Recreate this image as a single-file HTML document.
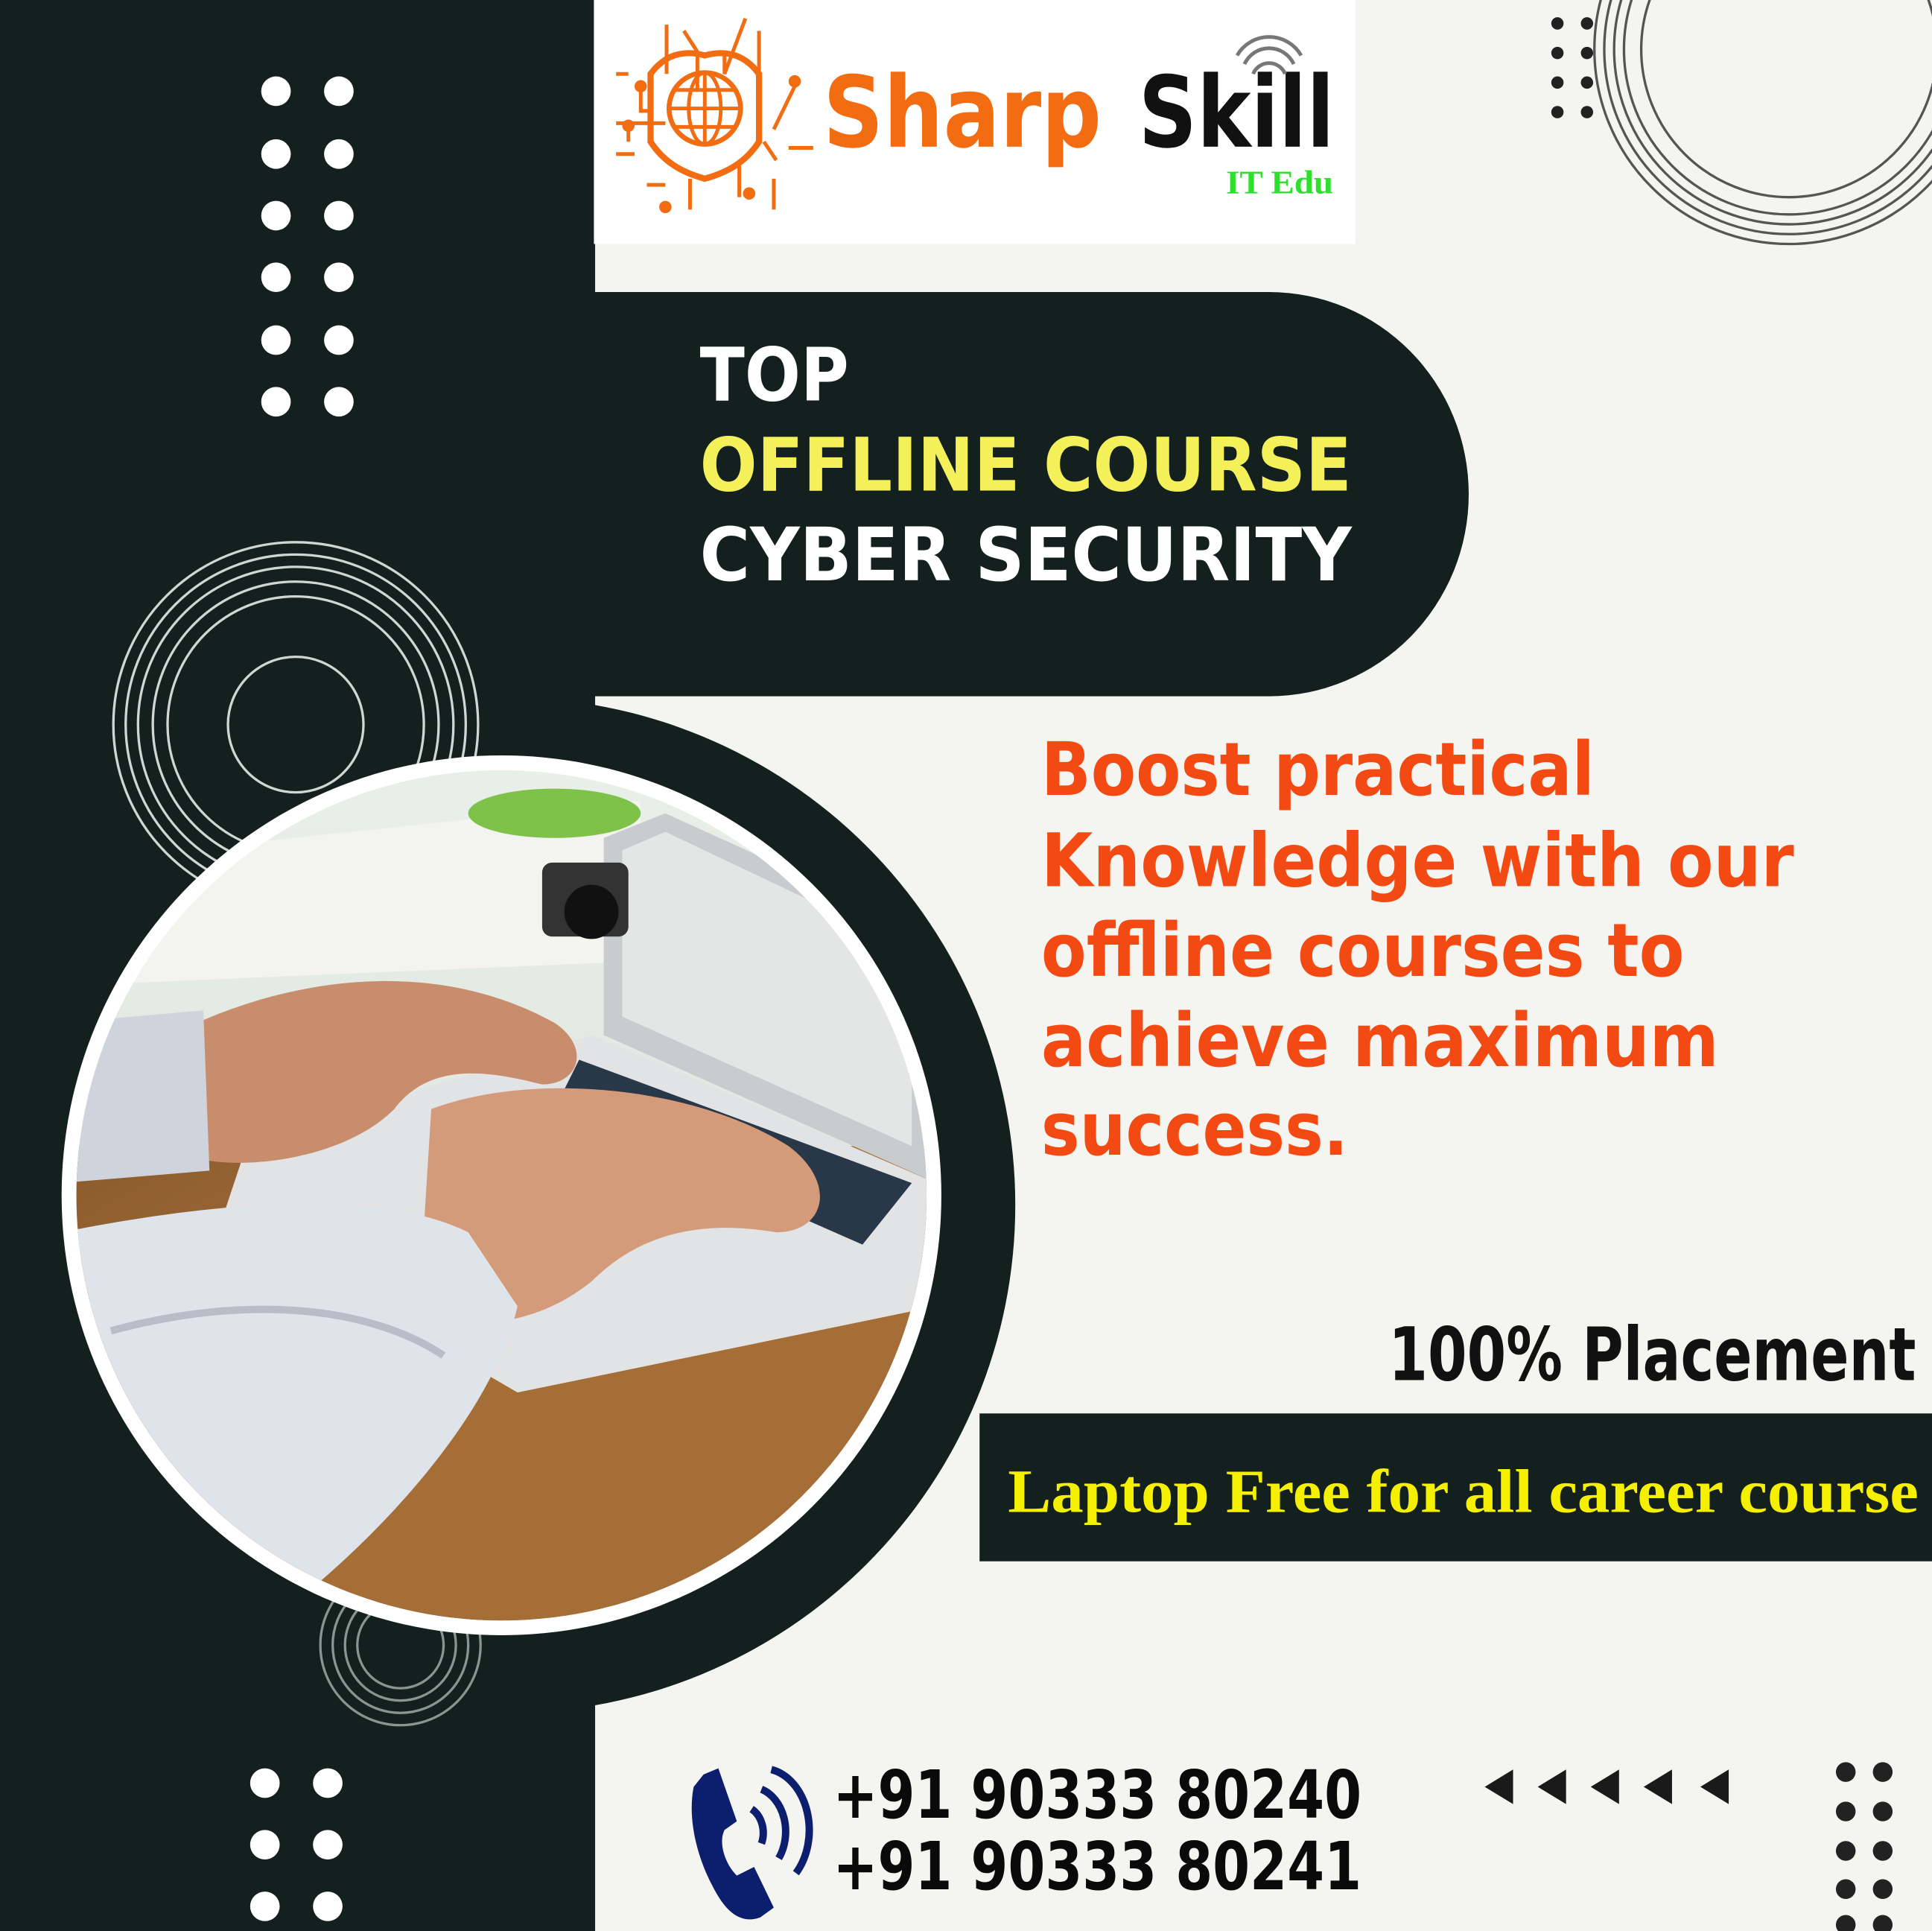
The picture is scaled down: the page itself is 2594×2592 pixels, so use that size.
<!DOCTYPE html>
<html><head><meta charset="utf-8"><style>
html,body{margin:0;padding:0;background:#f4f4f1;}
svg{display:block;}
</style></head><body>
<svg width="2594" height="2592" viewBox="0 0 1568 1567" xmlns="http://www.w3.org/2000/svg" preserveAspectRatio="none">
<defs>
<clipPath id="pc"><circle cx="407" cy="970" r="345"/></clipPath>
<linearGradient id="wall" x1="0" y1="0" x2="0" y2="1"><stop offset="0" stop-color="#e9efe9"/><stop offset="1" stop-color="#d8dcd8"/></linearGradient>
<linearGradient id="wood" x1="0" y1="0" x2="1" y2="1"><stop offset="0" stop-color="#8a5a2c"/><stop offset="0.5" stop-color="#b07a42"/><stop offset="1" stop-color="#7a4a20"/></linearGradient>
</defs>
<rect width="1568" height="1567" fill="#f4f4f1"/>
<rect x="0" y="0" width="483" height="1567" fill="#13201e"/>
<circle cx="412" cy="978" r="412" fill="#13201e"/>
<g fill="none" stroke="#cfd6d3" stroke-width="2">
<circle cx="240" cy="588" r="148"/><circle cx="240" cy="588" r="138"/><circle cx="240" cy="588" r="128"/><circle cx="240" cy="588" r="116"/><circle cx="240" cy="588" r="104"/><circle cx="240" cy="588" r="55"/>
</g>
<g fill="none" stroke="#8a9490" stroke-width="2">
<circle cx="325" cy="1335" r="65"/><circle cx="325" cy="1335" r="55"/><circle cx="325" cy="1335" r="45"/><circle cx="325" cy="1335" r="35"/>
</g>
<g fill="none" stroke="#555" stroke-width="2">
<circle cx="1452" cy="40" r="158"/><circle cx="1452" cy="40" r="150"/><circle cx="1452" cy="40" r="142"/><circle cx="1452" cy="40" r="134"/><circle cx="1452" cy="40" r="120"/>
</g>
<circle cx="407" cy="970" r="357" fill="#ffffff"/>
<g clip-path="url(#pc)">
<rect x="50" y="610" width="720" height="720" fill="url(#wall)"/>
<polygon points="50,700 520,650 520,780 50,800" fill="#f3f4ef"/>
<rect x="50" y="930" width="720" height="400" fill="url(#wood)"/>
<polygon points="60,1020 400,1100 760,980 760,1330 60,1330" fill="#a66e37"/>
<polygon points="490,680 540,660 760,760 760,960 490,840" fill="#c9ccce"/>
<polygon points="505,690 540,675 740,770 740,930 505,825" fill="#e4e6e6"/>
<polygon points="200,930 480,840 760,960 760,1060 420,1130 180,990" fill="#e2e3e5"/>
<polygon points="470,860 740,960 700,1010 450,900" fill="#283848"/>
<rect x="440" y="700" width="70" height="60" rx="8" fill="#333"/>
<circle cx="480" cy="740" r="22" fill="#111"/>
<ellipse cx="450" cy="660" rx="70" ry="20" fill="#7ec24a"/>
<path d="M160,830 C250,790 360,780 450,830 C480,850 470,880 440,880 C400,870 350,860 320,900 C280,940 200,950 160,940 Z" fill="#c88d6c"/>
<path d="M350,900 C430,870 560,880 640,930 C680,960 670,1000 630,1000 C570,990 520,1000 480,1040 C430,1080 370,1080 340,1060 Z" fill="#d49b7a"/>
<path d="M50,830 L165,820 L170,950 L50,960 Z" fill="#cfd3dc"/>
<path d="M50,1000 C150,980 300,960 380,1000 L420,1060 C400,1150 300,1260 200,1330 L50,1330 Z" fill="#dfe3ea"/>
<path d="M90,1080 C200,1050 300,1060 360,1100" stroke="#b8bec8" stroke-width="6" fill="none"/>
</g>
<g fill="#ffffff">
<circle cx="224" cy="74" r="12"/><circle cx="275" cy="74" r="12"/>
<circle cx="224" cy="125" r="12"/><circle cx="275" cy="125" r="12"/>
<circle cx="224" cy="175" r="12"/><circle cx="275" cy="175" r="12"/>
<circle cx="224" cy="225" r="12"/><circle cx="275" cy="225" r="12"/>
<circle cx="224" cy="276" r="12"/><circle cx="275" cy="276" r="12"/>
<circle cx="224" cy="326" r="12"/><circle cx="275" cy="326" r="12"/>
<circle cx="215" cy="1447" r="12"/><circle cx="266" cy="1447" r="12"/>
<circle cx="215" cy="1497" r="12"/><circle cx="266" cy="1497" r="12"/>
<circle cx="215" cy="1547" r="12"/><circle cx="266" cy="1547" r="12"/>
</g>
<g fill="#222">
<circle cx="1264" cy="19" r="5"/><circle cx="1288" cy="19" r="5"/>
<circle cx="1264" cy="43" r="5"/><circle cx="1288" cy="43" r="5"/>
<circle cx="1264" cy="67" r="5"/><circle cx="1288" cy="67" r="5"/>
<circle cx="1264" cy="91" r="5"/><circle cx="1288" cy="91" r="5"/>
<circle cx="1498" cy="1438" r="8"/><circle cx="1528" cy="1438" r="8"/>
<circle cx="1498" cy="1470" r="8"/><circle cx="1528" cy="1470" r="8"/>
<circle cx="1498" cy="1502" r="8"/><circle cx="1528" cy="1502" r="8"/>
<circle cx="1498" cy="1533" r="8"/><circle cx="1528" cy="1533" r="8"/>
<circle cx="1498" cy="1562" r="8"/><circle cx="1528" cy="1562" r="8"/>
</g>
<g fill="#1a1a1a">
<polygon points="1205,1450 1228,1436 1228,1464"/>
<polygon points="1248,1450 1271,1436 1271,1464"/>
<polygon points="1291,1450 1314,1436 1314,1464"/>
<polygon points="1334,1450 1357,1436 1357,1464"/>
<polygon points="1380,1450 1403,1436 1403,1464"/>
</g>
<rect x="482" y="0" width="618" height="198" fill="#ffffff"/>
<g stroke="#f26c12" stroke-width="3" fill="none">
<path d="M572,45 C590,40 605,45 616,60 L616,115 C605,132 590,140 572,145 C554,140 539,132 528,115 L528,60 C539,45 554,40 572,45 Z" stroke-width="5"/>
<circle cx="572" cy="88" r="29" stroke-width="4"/>
<ellipse cx="572" cy="88" rx="13" ry="29" stroke-width="3"/>
<line x1="543" y1="88" x2="601" y2="88"/><line x1="546" y1="73" x2="598" y2="73"/><line x1="546" y1="103" x2="598" y2="103"/><line x1="572" y1="59" x2="572" y2="117"/>
<path d="M541,20 L541,60 M555,25 L566,42 L566,72 M588,45 L588,60 L605,15 M616,25 L616,70 M520,70 L520,90 L528,90 M500,60 L510,60 M500,125 L515,125 M525,150 L540,150 M560,145 L560,170 M600,130 L600,160 M628,145 L628,170 M620,115 L630,130 M645,70 L628,105 M640,120 L660,120 M500,100 L540,100 M510,105 L510,115"/>
</g>
<g fill="#f26c12"><circle cx="520" cy="70" r="5"/><circle cx="510" cy="102" r="5"/><circle cx="645" cy="66" r="5"/><circle cx="540" cy="168" r="5"/><circle cx="608" cy="157" r="5"/></g>
<text x="668" y="119" font-family="DejaVu Sans, Liberation Sans, sans-serif" font-weight="bold" font-size="80" fill="#f26c12" textLength="226" lengthAdjust="spacingAndGlyphs">Sharp</text>
<text x="924" y="119" font-family="DejaVu Sans, Liberation Sans, sans-serif" font-weight="bold" font-size="80" fill="#111" textLength="159" lengthAdjust="spacingAndGlyphs">Skill</text>
<g fill="none" stroke="#777" stroke-width="3"><path d="M1017,60 A14,14 0 0 1 1043,60"/><path d="M1010,52 A22,22 0 0 1 1050,52"/><path d="M1004,45 A30,30 0 0 1 1056,45"/></g>
<text x="995" y="157" font-family="Liberation Serif, serif" font-weight="bold" font-size="27" fill="#2ee02e" textLength="87" lengthAdjust="spacingAndGlyphs">IT Edu</text>
<path d="M482,237 L1030,237 A162,164 0 0 1 1192,401 A162,164 0 0 1 1030,565 L482,565 Z" fill="#13201e"/>
<g font-family="DejaVu Sans, Liberation Sans, sans-serif" font-weight="bold" font-size="60">
<text x="568" y="325" fill="#ffffff" textLength="121" lengthAdjust="spacingAndGlyphs">TOP</text>
<text x="568" y="398" fill="#f4f05a" textLength="529" lengthAdjust="spacingAndGlyphs">OFFLINE COURSE</text>
<text x="568" y="471" fill="#ffffff" textLength="529" lengthAdjust="spacingAndGlyphs">CYBER SECURITY</text>
</g>
<g font-family="DejaVu Sans, Liberation Sans, sans-serif" font-weight="bold" font-size="60" fill="#f24a12">
<text x="845" y="645" textLength="449" lengthAdjust="spacingAndGlyphs">Boost practical</text>
<text x="845" y="719" textLength="611" lengthAdjust="spacingAndGlyphs">Knowledge with our</text>
<text x="845" y="792" textLength="522" lengthAdjust="spacingAndGlyphs">offline courses to</text>
<text x="845" y="865" textLength="550" lengthAdjust="spacingAndGlyphs">achieve maximum</text>
<text x="845" y="937" textLength="249" lengthAdjust="spacingAndGlyphs">success.</text>
</g>
<text x="1127" y="1120" font-family="DejaVu Sans, Liberation Sans, sans-serif" font-weight="bold" font-size="60" fill="#111" textLength="428" lengthAdjust="spacingAndGlyphs">100% Placement</text>
<rect x="795" y="1147" width="773" height="120" fill="#13201e"/>
<text x="818" y="1227" font-family="Liberation Serif, serif" font-weight="bold" font-size="50" fill="#f4f000" textLength="739" lengthAdjust="spacingAndGlyphs">Laptop Free for all career course</text>
<g fill="#0c1f6e">
<path d="M571,1440 L583,1435 L598,1478 L588,1485 C583,1495 588,1512 598,1522 L612,1515 L628,1548 L617,1556 C600,1562 588,1550 578,1530 C565,1505 558,1475 563,1450 Z"/>
<path d="M610,1468 A18,22 0 0 1 618,1496" stroke="#0c1f6e" stroke-width="6" fill="none"/>
<path d="M618,1452 A28,36 0 0 1 632,1508" stroke="#0c1f6e" stroke-width="6" fill="none"/>
<path d="M626,1436 A38,50 0 0 1 646,1520" stroke="#0c1f6e" stroke-width="6" fill="none"/>
</g>
<g font-family="DejaVu Sans, Liberation Sans, sans-serif" font-weight="bold" font-size="54" fill="#0a0a0a">
<text x="676" y="1475" textLength="429" lengthAdjust="spacingAndGlyphs">+91 90333 80240</text>
<text x="676" y="1533" textLength="429" lengthAdjust="spacingAndGlyphs">+91 90333 80241</text>
</g>
</svg>
</body></html>
